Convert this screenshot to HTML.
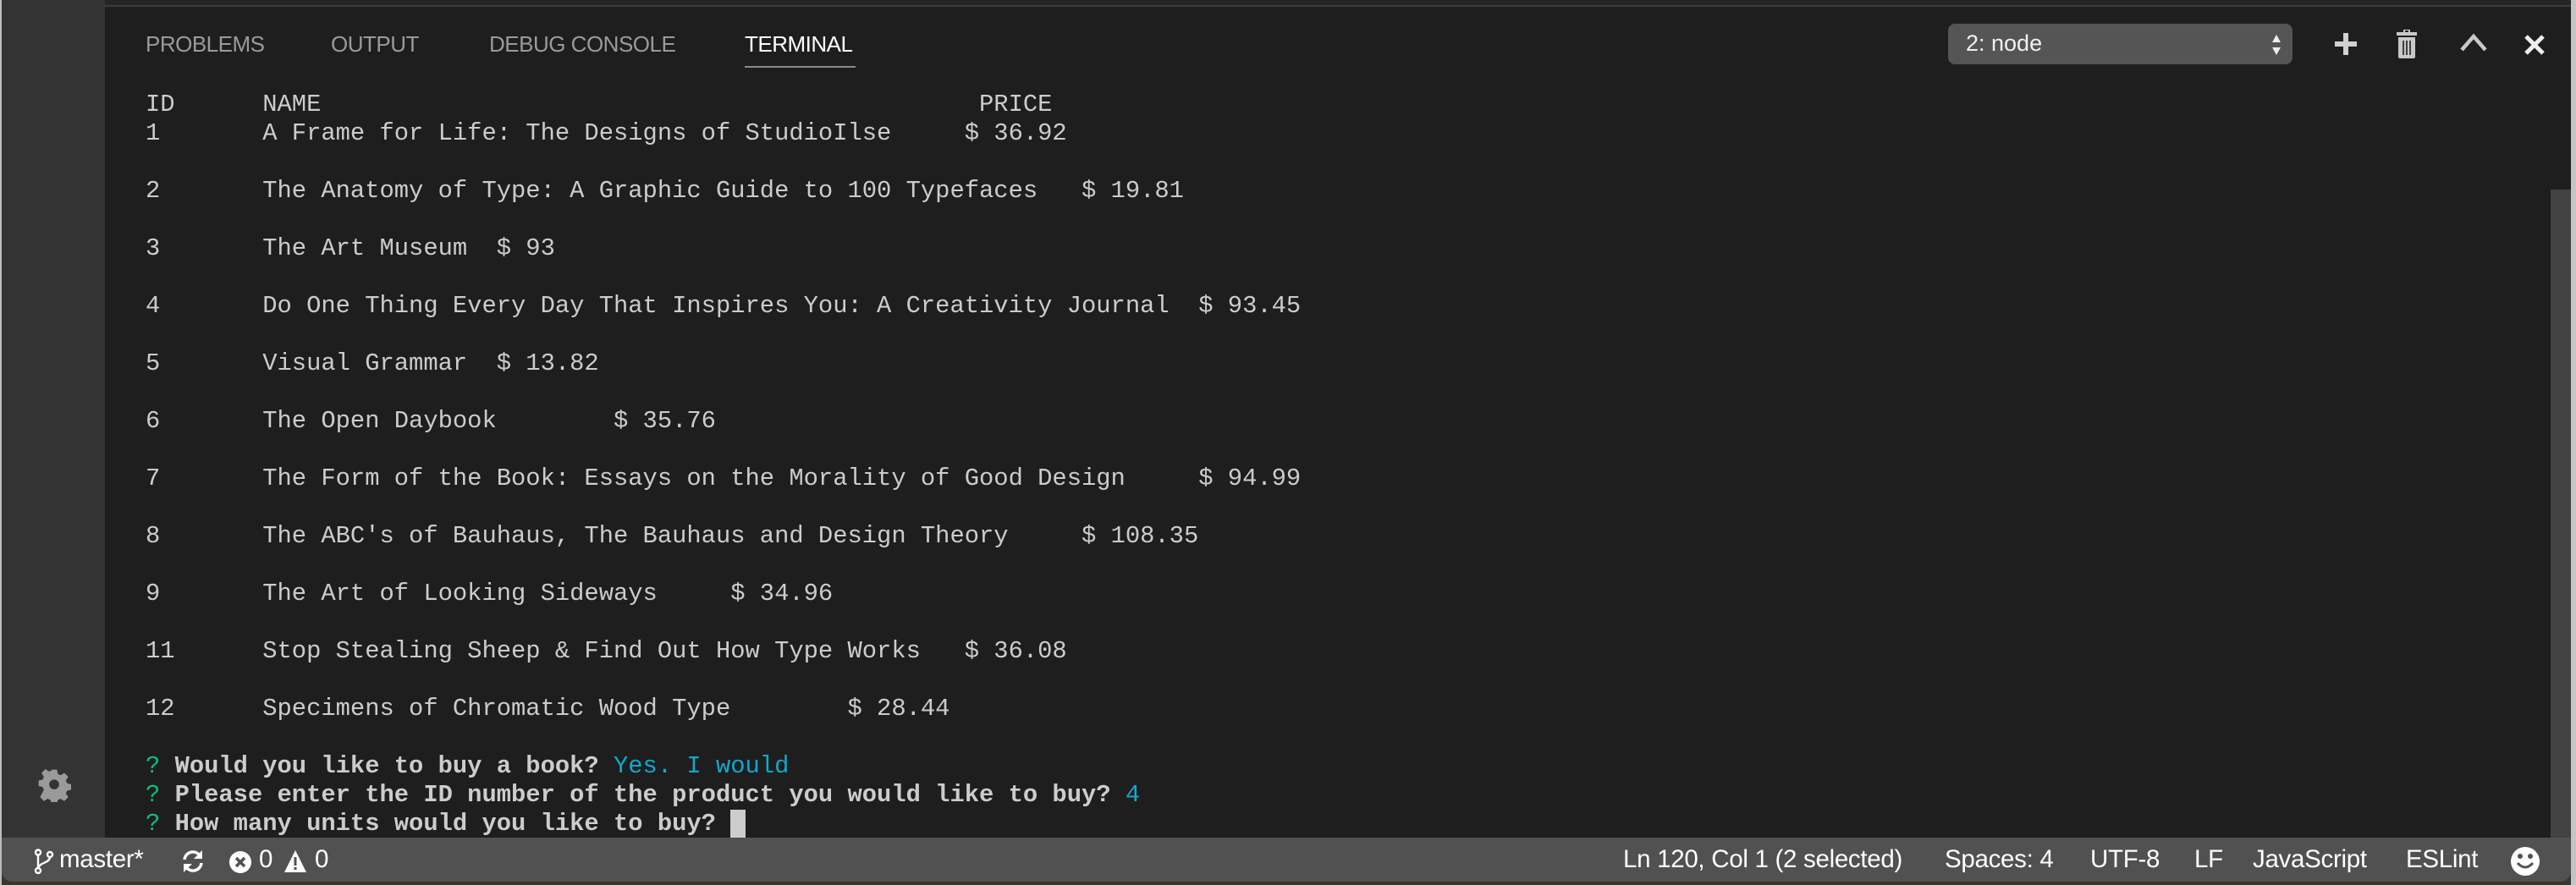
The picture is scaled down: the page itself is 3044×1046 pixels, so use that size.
<!DOCTYPE html>
<html><head><meta charset="utf-8"><style>
html,body{margin:0;padding:0}
body{width:3044px;height:1046px;position:relative;overflow:hidden;background:#3a3530;font-family:"Liberation Sans",sans-serif}
.abs{position:absolute}
#win{left:2px;top:0;width:3036px;height:1042px;background:#1e1e1e;border-radius:0 0 12px 12px;overflow:hidden}
#right{left:3038px;top:0;width:6px;height:1046px;background:#c4c4c4}
#left{left:0;top:0;width:2px;height:1046px;background:#bdbdbd}
.tab{top:37px;font-size:26px;color:#9a9a9a;letter-spacing:-0.5px}
pre{margin:0;font-family:"Liberation Mono","DejaVu Sans Mono",monospace;font-size:28.8px;line-height:34px;color:#cccccc;white-space:pre}
.b{font-weight:bold}
.g{color:#0dbc79}.c{color:#11a8cd}
.sb{color:#fff;font-size:29.5px;top:999px;letter-spacing:-0.3px}
</style></head><body>
<div id="left" class="abs"></div>
<div id="right" class="abs"></div>
<div id="win" class="abs">
  <div class="abs" style="left:0;top:0;width:3036px;height:6px;background:#252526"></div>
  <div class="abs" style="left:122px;top:6px;width:2914px;height:2px;background:#3c3c3c"></div>
  <div class="abs" style="left:0;top:0;width:122px;height:990px;background:#333333"></div>
  <svg class="abs" style="left:42px;top:908px" width="40" height="40" viewBox="0 0 24 24"><path fill="#9a9a9a" d="M10 1h4l.6 3 2 1 2.6-1.7 2.8 2.8L20.3 8.7l.9 2 2.8.6v4l-2.8.6-.9 2 1.7 2.6-2.8 2.8-2.6-1.7-2 .9-.6 2.8h-4l-.6-2.8-2-.9-2.6 1.7-2.8-2.8L4.7 15.3l-.9-2L1 12.7v-4l2.8-.6.9-2L3 3.4 5.8.6 8.4 2.3l2-.9z"/><circle cx="12" cy="11.5" r="3.5" fill="#333"/></svg>
  <div class="abs tab" style="left:170px">PROBLEMS</div>
  <div class="abs tab" style="left:389px">OUTPUT</div>
  <div class="abs tab" style="left:576px">DEBUG CONSOLE</div>
  <div class="abs tab" style="left:878px;color:#fff">TERMINAL</div>
  <div class="abs" style="left:878px;top:78px;width:131px;height:2px;background:#8a8a8a"></div>
  <div class="abs" style="left:2300px;top:28px;width:407px;height:48px;background:#555;border-radius:8px"></div>
  <div class="abs" style="left:2321px;top:36px;color:#f0f0f0;font-size:27px">2: node</div>
  <svg class="abs" style="left:2682px;top:40px" width="12" height="26" viewBox="0 0 12 26"><path fill="#eee" d="M6 1l5 9H1zM6 25l5-9H1z"/></svg>
  <svg class="abs" style="left:2756px;top:38px" width="28" height="28" viewBox="0 0 28 28"><path fill="#d0d0d0" d="M11 1h6v10h10v6H17v10h-6V17H1v-6h10z"/></svg>
  <svg class="abs" style="left:2828px;top:34px" width="28" height="36" viewBox="0 0 28 36"><path fill="#c8c8c8" d="M10 1h8v3h8v4H2V4h8zM12 2v2h4V2zM4 10h20v23a2 2 0 0 1-2 2H6a2 2 0 0 1-2-2z"/><path stroke="#1e1e1e" stroke-width="1.6" d="M10 14v17M14 14v17M18 14v17"/></svg>
  <svg class="abs" style="left:2904px;top:38px" width="34" height="24" viewBox="0 0 34 24"><path fill="none" stroke="#c8c8c8" stroke-width="4.5" d="M3 21L17 5l14 16"/></svg>
  <svg class="abs" style="left:2980px;top:40px" width="26" height="26" viewBox="0 0 26 26"><path stroke="#eee" stroke-width="5" d="M3 3l20 20M23 3L3 23"/></svg>
  <div class="abs" style="left:3012px;top:224px;width:24px;height:766px;background:#424242"></div>
  <pre class="abs" style="left:170px;top:107px">ID      NAME                                             PRICE
1       A Frame for Life: The Designs of StudioIlse     $ 36.92

2       The Anatomy of Type: A Graphic Guide to 100 Typefaces   $ 19.81

3       The Art Museum  $ 93

4       Do One Thing Every Day That Inspires You: A Creativity Journal  $ 93.45

5       Visual Grammar  $ 13.82

6       The Open Daybook        $ 35.76

7       The Form of the Book: Essays on the Morality of Good Design     $ 94.99

8       The ABC's of Bauhaus, The Bauhaus and Design Theory     $ 108.35

9       The Art of Looking Sideways     $ 34.96

11      Stop Stealing Sheep &amp; Find Out How Type Works   $ 36.08

12      Specimens of Chromatic Wood Type        $ 28.44

<span class="g">?</span> <span class="b">Would you like to buy a book?</span> <span class="c">Yes. I would</span>
<span class="g">?</span> <span class="b">Please enter the ID number of the product you would like to buy?</span> <span class="c">4</span>
<span class="g">?</span> <span class="b">How many units would you like to buy?</span> <span style="background:#ccc"> </span></pre>
  <div class="abs" style="left:0;top:990px;width:3036px;height:52px;background:#515151"></div>
  <svg class="abs" style="left:38px;top:1003px" width="24" height="30" viewBox="0 0 24 30"><g fill="none" stroke="#fff" stroke-width="2.4"><circle cx="5" cy="4.5" r="3"/><circle cx="5" cy="26" r="3"/><circle cx="19" cy="7" r="3"/><path d="M5 7.5v15.5M19 10c0 7-12 6-14 13"/></g></svg>
  <div class="abs sb" style="left:68px">master*</div>
  <svg class="abs" style="left:211px;top:1003px" width="30" height="30" viewBox="0 0 30 30"><g fill="none" stroke="#fff" stroke-width="3.4"><path d="M5 13a10 10 0 0 1 18-5M25 17a10 10 0 0 1-18 5"/></g><path fill="#fff" d="M26 2v10h-10zM4 28V18h10z"/></svg>
  <svg class="abs" style="left:268px;top:1005px" width="28" height="28" viewBox="0 0 28 28"><circle cx="14" cy="14" r="13" fill="#fff"/><path stroke="#515151" stroke-width="3.5" d="M9 9l10 10M19 9L9 19"/></svg>
  <div class="abs sb" style="left:304px">0</div>
  <svg class="abs" style="left:333px;top:1004px" width="28" height="28" viewBox="0 0 28 28"><path fill="#fff" d="M14 1l13 26H1z"/><path stroke="#515151" stroke-width="3" d="M14 9v10M14 21v3"/></svg>
  <div class="abs sb" style="left:370px">0</div>
  <div class="abs sb" style="left:1916px">Ln 120, Col 1 (2 selected)</div>
  <div class="abs sb" style="left:2296px">Spaces: 4</div>
  <div class="abs sb" style="left:2468px">UTF-8</div>
  <div class="abs sb" style="left:2591px">LF</div>
  <div class="abs sb" style="left:2660px">JavaScript</div>
  <div class="abs sb" style="left:2841px">ESLint</div>
  <svg class="abs" style="left:2964px;top:1000px" width="36" height="36" viewBox="0 0 36 36"><circle cx="18" cy="18" r="17" fill="#fff"/><circle cx="12" cy="12" r="3" fill="#515151"/><circle cx="24" cy="12" r="3" fill="#515151"/><path fill="none" stroke="#515151" stroke-width="3" d="M9 20q9 10 18 0"/></svg>
</div>
</body></html>
